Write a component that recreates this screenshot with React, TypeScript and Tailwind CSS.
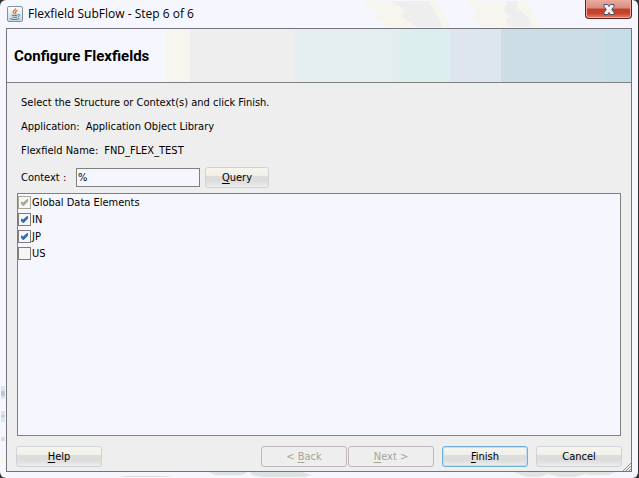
import { useState } from 'react'
import type { ReactNode } from 'react'
import clsx from 'clsx'

interface ContextOption {
  name: string
  checked: boolean
  locked?: boolean
}

const initialContexts: ContextOption[] = [
  { name: 'Global Data Elements', checked: true, locked: true },
  { name: 'IN', checked: true },
  { name: 'JP', checked: true },
  { name: 'US', checked: false },
]

function JavaIcon() {
  return (
    <svg className="h-4 w-4 shrink-0" viewBox="0 0 16 16" fill="none" aria-hidden="true">
      <defs>
        <linearGradient id="java-tile" x1="0" y1="0" x2="0" y2="1">
          <stop offset="0" stopColor="#ffffff" />
          <stop offset="1" stopColor="#c6d3dc" />
        </linearGradient>
      </defs>
      <rect x="0.5" y="0.5" width="15" height="15" rx="1.5" fill="url(#java-tile)" stroke="#7a93a5" />
      <path d="M8.6 2.3C9 4 5.7 4.7 6.2 6.3c.2.7 1 1.2 1 2M10.6 4.4C8.8 5 7.8 5.8 8.6 6.8c.4.6.2 1-.2 1.5" stroke="#e6791e" strokeWidth="1.3" />
      <path d="M4.7 9c1.6.7 4 .7 6 0M5.4 11c1.2.5 3.2.5 4.8 0M3.2 12.6c2 1.2 7 1.2 9.2-.2M11 8.6c2-.5 2.3 1.4.2 2.2" stroke="#4c7391" />
    </svg>
  )
}

function CloseButton() {
  return (
    <button
      aria-label="Close"
      className="flex h-[19px] w-[47px] items-center justify-center rounded-b border border-t-0 border-[#5b2524] bg-[linear-gradient(#e5aca2_0%,#d98c7e_45%,#bd3f2a_50%,#c8452e_75%,#e5836a_100%)] shadow-[inset_0_0_0_1px_#eba99a]"
    >
      <svg className="h-[11px] w-3" viewBox="0 0 12 11" aria-hidden="true">
        <path
          d="M1 .5h3.600L6 2.500 7.400 .5H11v2L8.700 5.500 11 8.500v2H7.400L6 8.500l-1.400 2H1v-2l2.300-3L1 2.500z"
          fill="#f4f4f4"
          stroke="#4b5267"
        />
      </svg>
    </button>
  )
}

interface PushButtonProps {
  children: ReactNode
  primary?: boolean
  disabled?: boolean
  size?: 'sm' | 'md'
}

function PushButton({ children, primary, disabled, size = 'md' }: PushButtonProps) {
  return (
    <button
      disabled={disabled}
      className={clsx(
        'flex h-[21px] items-center justify-center rounded-[3px] border',
        size === 'sm' ? 'w-16' : 'w-[86px]',
        disabled
          ? 'border-[#bfb8bf] bg-[#eeeeee] text-[#a5a594]'
          : 'bg-[linear-gradient(#f6f6ee_0%,#f0f0ea_40%,#dddddd_41%,#dddddd_70%,#eeeeee_100%)]',
        !disabled && (primary ? 'border-[#6daedb] shadow-[inset_0_0_0_1px_#c4dff0]' : 'border-[#cdd3d6]'),
      )}
    >
      <span>{children}</span>
    </button>
  )
}

function Mnemonic({ children }: { children: string }) {
  return <span className="underline underline-offset-2">{children}</span>
}

interface CheckRowProps {
  option: ContextOption
  onToggle: () => void
}

function CheckRow({ option, onToggle }: CheckRowProps) {
  return (
    <label className="flex h-[17px] items-center gap-px">
      <span className="grid h-[13px] w-[13px] shrink-0">
        <input
          type="checkbox"
          checked={option.checked}
          disabled={option.locked}
          onChange={onToggle}
          className="peer col-start-1 row-start-1 h-[13px] w-[13px] appearance-none border border-[#7f7b80] bg-[#f6f6f2] disabled:border-[#a9a798]"
        />
        <svg
          viewBox="0 0 13 13"
          aria-hidden="true"
          className="pointer-events-none invisible col-start-1 row-start-1 h-[13px] w-[13px] fill-[#2f6bbf] peer-checked:visible peer-disabled:fill-[#a9a798]"
        >
          <path d="M3 5.200 5 6.600 9.200 3H10v2.400L5.700 10H5L3 8z" />
        </svg>
      </span>
      {option.name}
    </label>
  )
}

// faint desktop shapes showing through the glass frame
function FrameGlass() {
  return (
    <>
      <svg className="pointer-events-none absolute top-px right-[97px] h-[26px] w-[180px]" viewBox="0 0 180 26" aria-hidden="true">
        <path d="M0 0h75l15 26H28L14 18l3-8L3 4z" fill="#f6f6ee" />
        <path d="M30 0h38l14 26H56L40 15l4-6z" fill="#eeeeee" />
        <path d="M104 0h62l14 26h-58l-10-9 4-6z" fill="#f6f6ee" />
        <path d="M146 0h11l-1 7 12 10 3 9h-24l-2-8 5-2-7-6z" fill="#eeeeee" />
      </svg>
      <svg className="pointer-events-none absolute bottom-0 left-0 h-24 w-[6px]" viewBox="0 0 6 96" aria-hidden="true">
        <path d="M1 4h4v13H1z" fill="#dde5ee" />
        <path d="M1 9h4v5H1z" fill="#c9c1cc" />
        <path d="M1 29h4v11H1z" fill="#dde5ee" />
        <path d="M1 33h4v2H1z" fill="#bcd5d5" />
        <path d="M1 55h4v4H1z" fill="#dddddd" />
        <path d="M1 72h4v10H1z" fill="#f6f6ee" />
      </svg>
      <svg className="pointer-events-none absolute right-3 bottom-0 h-[6px] w-[520px]" viewBox="0 0 520 6" aria-hidden="true">
        <path d="M0 3h520v1H0z" fill="#f6f6ee" />
        <path d="M20 4h40l6 1H12z" fill="#dddddd" />
        <path d="M102 0h40l-6 3h-26zM144 0h52l10 3-8 2h-42l-10-2z" fill="#dde2e2" />
        <path d="M408 0h102l-8 3h-18l-4-1-12 3h-14l-12-3-8 3h-14z" fill="#e2e4e4" />
      </svg>
    </>
  )
}

export default function App() {
  const [query, setQuery] = useState('%')
  const [contexts, setContexts] = useState(initialContexts)

  const toggle = (name: string) => {
    setContexts(contexts.map(c => (c.name === name ? { ...c, checked: !c.checked } : c)))
  }

  return (
    <div className="h-screen bg-[#333333] font-['DejaVu_Sans_Condensed','DejaVu_Sans',sans-serif] text-[11px] leading-4 text-black">
      <div className="relative flex h-full flex-col overflow-hidden rounded-[6px] border-r border-[#333333] bg-[#f6f6ff] pr-[6px] pb-[6px] pl-[6px]">
        <FrameGlass />
        <div className="relative flex h-7 shrink-0 items-start justify-between">
          <div className="flex h-7 items-center gap-[5px] pl-px font-['Open_Sans',sans-serif] text-xs">
            <JavaIcon />
            <h1>Flexfield SubFlow - Step 6 of 6</h1>
          </div>
          <CloseButton />
        </div>

        <main className="relative flex min-h-0 flex-1 flex-col border border-[#77737b] bg-[#eeeeee]">
          <header className="flex h-[54px] shrink-0 border-b border-[#808080] bg-[#f6f6ff]">
            <div className="flex w-[159px] shrink-0 items-center pl-[7px]">
              <h2 className="font-[Roboto,sans-serif] text-[15px] font-bold whitespace-nowrap">Configure Flexfields</h2>
            </div>
            <div className="grid flex-1 grid-cols-[24fr_105fr_105fr_51fr_51fr_105fr_25fr]">
              <div className="bg-[#f6f6ee]" />
              <div className="bg-[#eeeeee]" />
              <div className="bg-[#e5eeee]" />
              <div className="bg-[#dceeee]" />
              <div className="bg-[#dde5ee]" />
              <div className="bg-[#ccdde5]" />
              <div className="bg-[#c4dde6]" />
            </div>
          </header>

          <div className="flex min-h-0 flex-1 flex-col px-[10px] pt-3 pb-1">
            <div className="flex flex-col gap-2 pl-1">
              <p>Select the Structure or Context(s) and click Finish.</p>
              <p className="flex gap-1.5">
                <span>Application:</span>
                <span>Application Object Library</span>
              </p>
              <p className="flex gap-1.5">
                <span>Flexfield Name:</span>
                <span>FND_FLEX_TEST</span>
              </p>
              <div className="flex items-center gap-[5px]">
                <label htmlFor="context" className="w-[50px]">Context :</label>
                <input
                  id="context"
                  value={query}
                  onChange={e => setQuery(e.target.value)}
                  className="h-[19px] w-[124px] border border-[#808080] bg-[#f6f6ff] px-px outline-none"
                />
                <PushButton size="sm"><Mnemonic>Q</Mnemonic>uery</PushButton>
              </div>
            </div>

            <div className="mt-[5px] min-h-0 flex-1 overflow-auto border border-[#808080] bg-[#f6f6ff]">
              {contexts.map(option => (
                <CheckRow key={option.name} option={option} onToggle={() => toggle(option.name)} />
              ))}
            </div>

            <footer className="-mx-px mt-[10px] flex shrink-0 items-center">
              <PushButton><Mnemonic>H</Mnemonic>elp</PushButton>
              <div className="ml-auto flex gap-px">
                <PushButton disabled>&lt; <Mnemonic>B</Mnemonic>ack</PushButton>
                <PushButton disabled><Mnemonic>N</Mnemonic>ext &gt;</PushButton>
              </div>
              <div className="ml-2 flex gap-2">
                <PushButton primary><Mnemonic>F</Mnemonic>inish</PushButton>
                <PushButton>Cancel</PushButton>
              </div>
            </footer>
          </div>

          <svg className="pointer-events-none absolute right-0 bottom-0 h-2 w-2" viewBox="0 0 8 8" stroke="#91917f" aria-hidden="true">
            <path d="M0 8 8 0M3 8 8 3M6 8 8 6" />
          </svg>
        </main>
      </div>
    </div>
  )
}
